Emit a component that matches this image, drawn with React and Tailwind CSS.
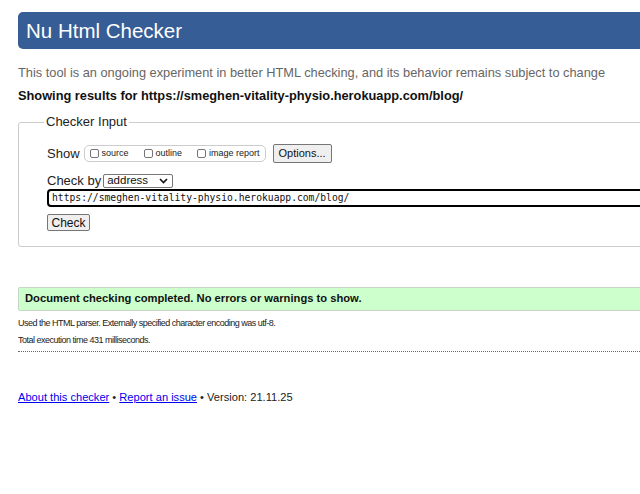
import React from "react";

function Box({ label, last }) {
  return (
    <label className={"flex items-center whitespace-nowrap " + (last ? "" : "mr-[15px]")}>
      <span className="inline-block w-[9px] h-[9px] border border-[#767676] rounded-[2px] bg-white mr-[3px]" />
      <span className="text-[9px] leading-none text-[#222]">{label}</span>
    </label>
  );
}

export default function App() {
  return (
    <div className="w-[640px] h-[494px] overflow-hidden bg-white" style={{ fontFamily: '"Liberation Sans", Arial, sans-serif' }}>
      <div className="w-[720px] pl-[18px] pt-[12px]">
        <div className="h-[37px] bg-[#365d95] rounded-l-[5px] flex items-center pl-[8px]">
          <h1 className="text-white text-[20.5px] leading-none mt-[1px]">Nu Html Checker</h1>
        </div>
        <p className="mt-[16px] text-[12.8px] text-[#666] leading-[16px]">
          This tool is an ongoing experiment in better HTML checking, and its behavior remains subject to change
        </p>
        <p className="mt-[7px] text-[12.8px] font-bold text-[#111] leading-[16px]">
          Showing results for https://smeghen-vitality-physio.herokuapp.com/blog/
        </p>
        <fieldset className="mt-[10px] border border-[#ccc] rounded-[3px] pl-[28px] pb-[12px] pt-[3px]">
          <legend className="-ml-[3px] px-[2px] text-[13px] text-[#222] leading-[16px]">Checker Input</legend>
          <div className="flex items-center h-[19px] mt-[11px]">
            <span className="text-[13px] text-[#222] mr-[4px]">Show</span>
            <div className="flex items-center h-[17px] border border-[#ccc] rounded-[5px] pl-[5px] pr-[5px]">
              <Box label="source" />
              <Box label="outline" />
              <Box label="image report" last />
            </div>
            <button className="ml-[7px] h-[19px] w-[59px] text-[11px] text-[#111] bg-[#efefef] border border-[#767676] rounded-[2px] leading-none">
              Options...
            </button>
          </div>
          <div className="flex items-center mt-[11px] h-[14px]">
            <span className="text-[13px] text-[#222] mr-[2px]">Check by</span>
            <div className="flex items-center justify-between w-[70px] h-[14px] border border-[#767676] rounded-[2px] pl-[3px] pr-[4px] bg-white">
              <span className="text-[11.5px] leading-none text-[#111]">address</span>
              <svg width="9" height="6" viewBox="0 0 9 6"><path d="M1 1l3.5 3.5L8 1" fill="none" stroke="#111" strokeWidth="1.6" /></svg>
            </div>
          </div>
          <div className="mt-[1px] h-[18px] border-2 border-black rounded-[4px] flex items-center pl-[3px]">
            <span className="text-[9.7px] text-[#111] leading-none" style={{ fontFamily: '"DejaVu Sans Mono", monospace' }}>
              https://smeghen-vitality-physio.herokuapp.com/blog/
            </span>
          </div>
          <button className="mt-[7px] h-[17px] w-[43px] text-[12px] text-[#111] bg-[#efefef] border border-[#767676] rounded-[2px] leading-none">
            Check
          </button>
        </fieldset>
        <div className="mt-[40px] h-[24px] bg-[#ccffcc] border border-[#c6d6c6] rounded-l-[2px] flex items-center pl-[6px]">
          <span className="text-[11.2px] font-bold text-[#111]">Document checking completed. No errors or warnings to show.</span>
        </div>
        <p className="mt-[6px] text-[9px] tracking-[-0.5px] text-[#222] leading-[12px]">
          Used the HTML parser. Externally specified character encoding was utf-8.
        </p>
        <p className="mt-[5px] text-[9px] tracking-[-0.5px] text-[#222] leading-[12px]">Total execution time 431 milliseconds.</p>
        <div className="mt-[5px] border-t border-dotted border-[#666]" />
        <p className="mt-[38px] text-[11.1px] text-[#222] leading-[14px]">
          <a href="#" className="text-[#0000ee] underline">About this checker</a>
          {" • "}
          <a href="#" className="text-[#0000ee] underline">Report an issue</a>
          {" • Version: 21.11.25"}
        </p>
      </div>
    </div>
  );
}
